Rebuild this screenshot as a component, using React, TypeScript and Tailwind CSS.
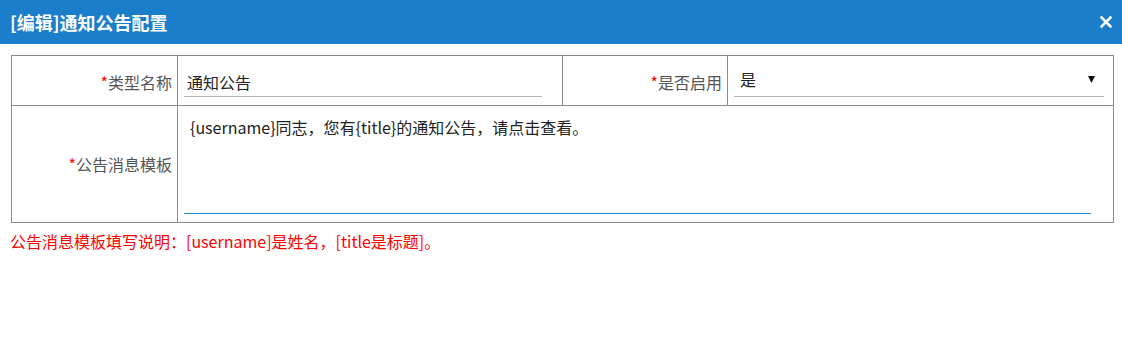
import { useState } from "react";

const font = '"Microsoft YaHei", "Noto Sans CJK SC", sans-serif';

export default function App() {
  const [name, setName] = useState("通知公告");
  const [enabled, setEnabled] = useState("是");
  const [tpl, setTpl] = useState(
    "{username}同志，您有{title}的通知公告，请点击查看。",
  );

  return (
    <div className="w-[1122px] h-[363px] bg-white" style={{ fontFamily: font }}>
      {/* Header */}
      <div className="h-[44px] bg-[#1a7eca] flex items-center justify-between pl-[10px] pr-[10px]">
        <span className="text-white font-bold text-[18px] leading-none">
          [编辑]通知公告配置
        </span>
        <button className="text-white">
          <svg width="12" height="12" viewBox="0 0 12 12">
            <path
              d="M1.5 1.5 L10.5 10.5 M10.5 1.5 L1.5 10.5"
              stroke="#fff"
              strokeWidth="2.6"
              strokeLinecap="square"
            />
          </svg>
        </button>
      </div>

      <div className="pl-[11px] pt-[11px]">
        <table className="border-collapse table-fixed w-[1102px] text-[16px]">
          <colgroup>
            <col className="w-[166px]" />
            <col className="w-[385px]" />
            <col className="w-[165px]" />
            <col className="w-[386px]" />
          </colgroup>
          <tbody>
            <tr className="h-[50px]">
              <td className="border border-[#8c8c8c] text-right pr-[5px] text-[#555] pt-[2px]">
                <span className="text-[#f00]">*</span>类型名称
              </td>
              <td className="border border-[#8c8c8c] pl-[6px] pr-[20px] align-top pt-[6px]">
                <input
                  value={name}
                  onChange={(e) => setName(e.target.value)}
                  className="w-full h-[35px] pt-[5px] pl-[3px] border-0 border-b border-solid border-b-[#b5b5b5] outline-none text-[#222]"
                />
              </td>
              <td className="border border-[#8c8c8c] text-right pr-[5px] text-[#555] pt-[2px]">
                <span className="text-[#f00]">*</span>是否启用
              </td>
              <td className="border border-[#8c8c8c] pl-[6px] pr-[9px] align-top pt-[6px]">
                <div className="relative h-[35px] border-b border-b-[#b5b5b5]">
                  <select
                    value={enabled}
                    onChange={(e) => setEnabled(e.target.value)}
                    className="appearance-none w-full h-full pl-[6px] outline-none bg-transparent text-[#222]"
                  >
                    <option>是</option>
                    <option>否</option>
                  </select>
                  <svg
                    className="absolute right-[9px] top-[14px] pointer-events-none"
                    width="7"
                    height="7"
                    viewBox="0 0 7 7"
                  >
                    <polygon points="0,0 7,0 3.5,7" fill="#111" />
                  </svg>
                </div>
              </td>
            </tr>
            <tr className="h-[117px]">
              <td className="border border-[#8c8c8c] text-right pr-[5px] text-[#555]">
                <span className="text-[#f00]">*</span>公告消息模板
              </td>
              <td
                colSpan={3}
                className="border border-[#8c8c8c] pl-[6px] pr-[22px] align-top pt-[7px]"
              >
                <textarea
                  value={tpl}
                  onChange={(e) => setTpl(e.target.value)}
                  className="block w-full h-[101px] resize-none px-[6px] py-[2px] border-0 border-b border-solid border-b-[#2a86c8] outline-none text-[#222] leading-[24px]"
                />
              </td>
            </tr>
          </tbody>
        </table>
      </div>

      <div className="pl-[10px] pt-[7px] text-[16px] text-[#f00] leading-[22px]">
        公告消息模板填写说明：[username]是姓名，[title是标题]。
      </div>
    </div>
  );
}
